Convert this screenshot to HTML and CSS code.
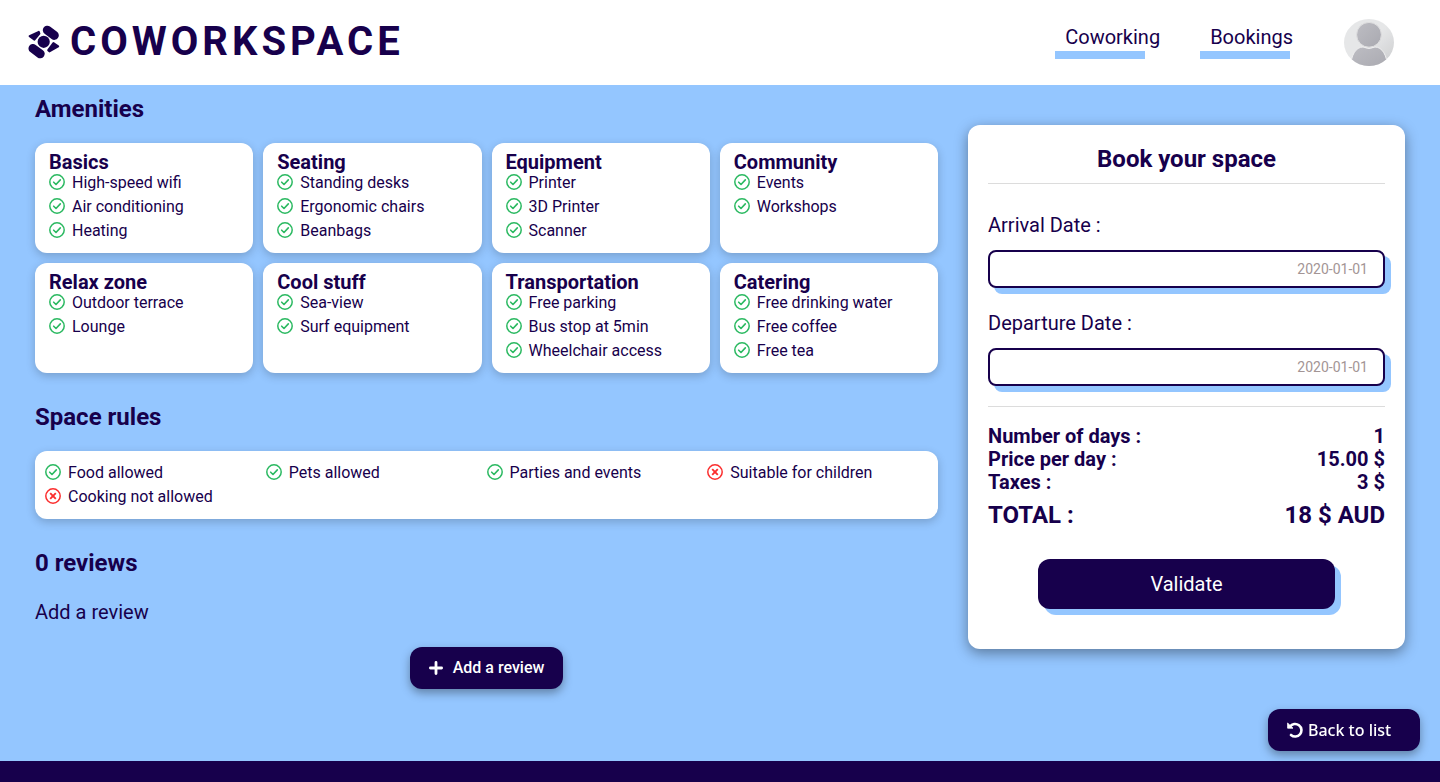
FILE: index.html
```html
<!DOCTYPE html>
<html lang="en">
<head>
<meta charset="utf-8">
<meta name="viewport" content="width=device-width, initial-scale=1">
<title>Coworkspace</title>
<link rel="stylesheet" href="styles.css">
</head>
<body>
<svg class="sprite" aria-hidden="true">
  <symbol id="check" viewBox="0 0 16 16">
    <circle cx="8" cy="8" r="7.2" fill="none" stroke="currentColor" stroke-width="1.5"/>
    <path d="M4.7 8.2l2.3 2.3 4.3-4.6" fill="none" stroke="currentColor" stroke-width="1.6" stroke-linecap="round" stroke-linejoin="round"/>
  </symbol>
  <symbol id="cross" viewBox="0 0 16 16">
    <circle cx="8" cy="8" r="7.2" fill="none" stroke="currentColor" stroke-width="1.5"/>
    <path d="M5.2 5.2l5.6 5.6M10.8 5.2l-5.6 5.6" fill="none" stroke="currentColor" stroke-width="1.9"/>
  </symbol>
</svg>

<header class="header">
  <a class="brand" href="#">
    <svg class="brand-mark" viewBox="0 0 32 34" aria-hidden="true">
      <circle cx="15.7" cy="16.8" r="6.1"/>
      <g stroke-linejoin="round" stroke-linecap="round">
        <path d="M19.3 5.2L26.3 10.4" stroke-width="9"/>
        <path d="M5 23.5L12.2 28.8" stroke-width="9"/>
        <path d="M1.6 11.2L10.8 6.9 11.4 8.5 6.4 14.6z" stroke-width="2"/>
        <path d="M30.2 21.4L25.4 18 20.2 25.2 21.4 26.4z" stroke-width="2"/>
      </g>
    </svg>
    <span class="brand-name">COWORKSPACE</span>
  </a>
  <nav class="nav">
    <a class="nav-link" href="#">Coworking</a>
    <a class="nav-link" href="#">Bookings</a>
    <a class="avatar" href="#" aria-label="Profile">
      <svg viewBox="0 0 50 47" aria-hidden="true">
        <defs>
          <linearGradient id="disc" x1="0" y1="0" x2="1" y2="1"><stop offset=".5" stop-color="#e6e7e8"/><stop offset="1" stop-color="#cbccce"/></linearGradient>
          <linearGradient id="person" x1="0" y1="0" x2="1" y2="1"><stop offset="0" stop-color="#bdbdc3"/><stop offset="1" stop-color="#a9a9b0"/></linearGradient>
          <clipPath id="oval"><ellipse cx="25" cy="23.5" rx="25" ry="23.5"/></clipPath>
        </defs>
        <g clip-path="url(#oval)">
          <rect width="50" height="47" fill="url(#disc)"/>
          <path d="M6.5 50C6.5 36 12 28 19 28Q25 31 31 28C38 28 43.5 36 43.5 50z" fill="url(#person)" stroke="#eeeeef" stroke-width="1"/>
          <circle cx="25" cy="15.8" r="12.4" fill="url(#person)" stroke="#dededf" stroke-width="1"/>
        </g>
      </svg>
    </a>
  </nav>
</header>

<main class="page">
  <div class="details">
    <section>
      <h2 class="section-title">Amenities</h2>
      <div class="amenities">
        <article class="card"><h3>Basics</h3><ul class="list">
          <li><svg class="icon"><use href="#check"/></svg>High-speed wifi</li>
          <li><svg class="icon"><use href="#check"/></svg>Air conditioning</li>
          <li><svg class="icon"><use href="#check"/></svg>Heating</li></ul></article>
        <article class="card"><h3>Seating</h3><ul class="list">
          <li><svg class="icon"><use href="#check"/></svg>Standing desks</li>
          <li><svg class="icon"><use href="#check"/></svg>Ergonomic chairs</li>
          <li><svg class="icon"><use href="#check"/></svg>Beanbags</li></ul></article>
        <article class="card"><h3>Equipment</h3><ul class="list">
          <li><svg class="icon"><use href="#check"/></svg>Printer</li>
          <li><svg class="icon"><use href="#check"/></svg>3D Printer</li>
          <li><svg class="icon"><use href="#check"/></svg>Scanner</li></ul></article>
        <article class="card"><h3>Community</h3><ul class="list">
          <li><svg class="icon"><use href="#check"/></svg>Events</li>
          <li><svg class="icon"><use href="#check"/></svg>Workshops</li></ul></article>
        <article class="card"><h3>Relax zone</h3><ul class="list">
          <li><svg class="icon"><use href="#check"/></svg>Outdoor terrace</li>
          <li><svg class="icon"><use href="#check"/></svg>Lounge</li></ul></article>
        <article class="card"><h3>Cool stuff</h3><ul class="list">
          <li><svg class="icon"><use href="#check"/></svg>Sea-view</li>
          <li><svg class="icon"><use href="#check"/></svg>Surf equipment</li></ul></article>
        <article class="card"><h3>Transportation</h3><ul class="list">
          <li><svg class="icon"><use href="#check"/></svg>Free parking</li>
          <li><svg class="icon"><use href="#check"/></svg>Bus stop at 5min</li>
          <li><svg class="icon"><use href="#check"/></svg>Wheelchair access</li></ul></article>
        <article class="card"><h3>Catering</h3><ul class="list">
          <li><svg class="icon"><use href="#check"/></svg>Free drinking water</li>
          <li><svg class="icon"><use href="#check"/></svg>Free coffee</li>
          <li><svg class="icon"><use href="#check"/></svg>Free tea</li></ul></article>
      </div>
    </section>

    <section>
      <h2 class="section-title">Space rules</h2>
      <ul class="list rules">
        <li><svg class="icon"><use href="#check"/></svg>Food allowed</li>
        <li><svg class="icon"><use href="#check"/></svg>Pets allowed</li>
        <li><svg class="icon"><use href="#check"/></svg>Parties and events</li>
        <li><svg class="icon icon-no"><use href="#cross"/></svg>Suitable for children</li>
        <li><svg class="icon icon-no"><use href="#cross"/></svg>Cooking not allowed</li>
      </ul>
    </section>

    <section class="reviews">
      <h2 class="section-title">0 reviews</h2>
      <p class="reviews-label">Add a review</p>
      <button class="pill" type="button">
        <svg class="plus" viewBox="0 0 14 14" aria-hidden="true"><path d="M7 1.4V12.6M1.4 7H12.6" stroke="currentColor" stroke-width="2.8" stroke-linecap="round"/></svg>
        Add a review
      </button>
    </section>
  </div>

  <form class="booking">
    <h2 class="booking-title">Book your space</h2>
    <div class="field">
      <label for="arrival">Arrival Date :</label>
      <input id="arrival" type="text" placeholder="2020-01-01">
    </div>
    <div class="field">
      <label for="departure">Departure Date :</label>
      <input id="departure" type="text" placeholder="2020-01-01">
    </div>
    <dl class="summary">
      <div class="line"><dt>Number of days :</dt><dd>1</dd></div>
      <div class="line"><dt>Price per day :</dt><dd>15.00 $</dd></div>
      <div class="line"><dt>Taxes :</dt><dd>3 $</dd></div>
      <div class="line total"><dt>TOTAL :</dt><dd>18 $ AUD</dd></div>
    </dl>
    <button class="validate" type="button">Validate</button>
  </form>
</main>

<a class="pill back" href="#">
  <svg class="undo" viewBox="0 0 16 16" aria-hidden="true"><path d="M3 4.6A6.3 6.3 0 1 1 4 13" fill="none" stroke="currentColor" stroke-width="2.6" stroke-linecap="round"/><path d="M.6 1V6.2H6z" fill="currentColor" stroke="currentColor" stroke-width=".8" stroke-linejoin="round"/></svg>
  Back to list
</a>
<footer class="footer"></footer>
</body>
</html>
```

FILE: styles.css
```css
:root {
  --ink: #17004c;
  --sky: #94c6ff;
}

* { box-sizing: border-box; margin: 0; padding: 0; }

body {
  display: flex;
  flex-direction: column;
  min-height: 100vh;
  background: var(--sky);
  color: var(--ink);
  font: 16px/19px Roboto, "Liberation Sans", sans-serif;
}

a { color: inherit; text-decoration: none; }
ul { list-style: none; }
button, input { font: inherit; }
.sprite { position: absolute; width: 0; height: 0; }

.header {
  display: flex;
  align-items: center;
  justify-content: space-between;
  height: 85px;
  padding: 0 46px 0 28px;
  background: #fff;
}

.brand { display: flex; align-items: center; gap: 10px; padding-bottom: 2px; }
.brand-mark { width: 32px; height: 34px; fill: var(--ink); stroke: var(--ink); }
.brand-mark circle { stroke: none; }
.brand-name { font-size: 40px; line-height: 46px; font-weight: 700; letter-spacing: 4px; }

.nav { display: flex; align-items: center; gap: 30px; }
.nav-link {
  position: relative;
  padding: 0 10px 10px;
  font-size: 20px;
  line-height: 23px;
}
.nav-link::after {
  content: "";
  position: absolute;
  left: 0;
  bottom: 0;
  width: 90px;
  height: 8px;
  background: var(--sky);
}
.avatar { width: 50px; margin-left: 11px; }
.avatar svg { display: block; width: 50px; height: 47px; }

.page {
  flex: 1;
  display: grid;
  grid-template-columns: minmax(0, 31fr) minmax(0, 15fr);
  gap: 30px;
  align-items: start;
  padding: 10px 35px 72px;
}

.details { display: grid; gap: 30px; }
.section-title { margin-bottom: 20px; font-size: 24px; line-height: 28px; font-weight: 700; }

.amenities { display: grid; grid-template-columns: repeat(4, minmax(0, 1fr)); gap: 10px; }
.card, .rules {
  border-radius: 12px;
  background: #fff;
  box-shadow: 0 3px 10px rgba(0, 0, 0, .2);
}
.card { padding: 8px 14px; }
.card h3 { font-size: 20px; line-height: 22px; font-weight: 700; }
.list li { display: flex; align-items: flex-start; gap: 7px; margin-bottom: 5px; }
.icon { flex: none; width: 16px; height: 16px; margin-top: 1px; color: #2bb961; }
.icon-no { color: #fb2e2e; }
.rules { display: grid; grid-template-columns: repeat(4, minmax(0, 1fr)); padding: 12px 10px 8px; }

.reviews { display: flex; flex-direction: column; align-items: flex-start; }
.reviews-label { margin-bottom: 23px; padding-top: 4px; font-size: 20px; line-height: 23px; }

.pill {
  display: flex;
  align-items: center;
  gap: 10px;
  height: 42px;
  padding: 0 19px;
  border: 0;
  border-radius: 12px;
  background: var(--ink);
  color: #fff;
  box-shadow: 0 4px 10px rgba(0, 0, 0, .35);
  font-weight: 500;
  line-height: 18px;
  cursor: pointer;
}
.reviews .pill { align-self: center; }
.plus { width: 14px; height: 14px; }

.booking {
  display: flex;
  flex-direction: column;
  margin-top: 30px;
  padding: 20px 20px 40px;
  border-radius: 12px;
  background: #fff;
  box-shadow: 0 4px 14px rgba(0, 0, 0, .4);
}
.booking-title {
  margin-bottom: 30px;
  padding-bottom: 10px;
  border-bottom: 1px solid #dcdcdc;
  font-size: 24px;
  line-height: 28px;
  text-align: center;
}
.field { display: grid; gap: 13px; margin-bottom: 24px; font-size: 20px; line-height: 23px; }
.field input {
  width: 100%;
  height: 38px;
  padding: 0 15px;
  border: 2px solid var(--ink);
  border-radius: 8px;
  box-shadow: 6px 6px 0 var(--sky);
  color: var(--ink);
  font-size: 14px;
  text-align: right;
}
.field input::placeholder { color: #a39595; opacity: 1; }
.summary {
  margin: -4px 0 30px;
  padding-top: 18px;
  border-top: 1px solid #dcdcdc;
  font-size: 20px;
  line-height: 23px;
  font-weight: 700;
}
.line { display: flex; justify-content: space-between; }
.total { margin-top: 7px; font-size: 24px; line-height: 28px; }
.validate {
  align-self: center;
  width: 75%;
  height: 50px;
  border: 0;
  border-radius: 12px;
  background: var(--ink);
  color: #fff;
  box-shadow: 6px 6px 0 var(--sky);
  font-size: 20px;
  cursor: pointer;
}

.back {
  position: fixed;
  right: 20px;
  bottom: 31px;
  width: 152px;
  gap: 5px;
  font-family: "Noto Sans", "Open Sans", sans-serif;
}
.undo { width: 16px; height: 16px; }

.footer { height: 21px; background: var(--ink); }
```
